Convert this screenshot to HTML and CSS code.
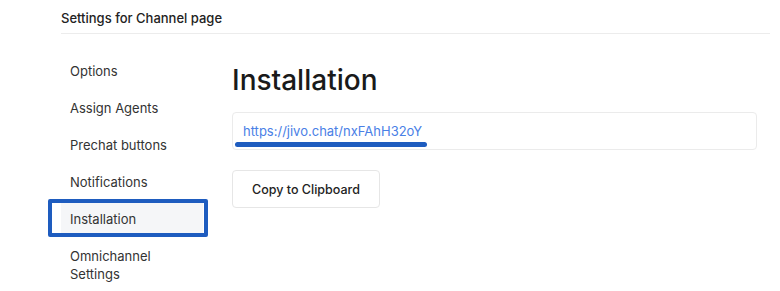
FILE: index.html
```html
<!DOCTYPE html>
<html lang="en">
<head>
  <meta charset="UTF-8">
  <title>Settings for Channel page</title>
  <meta name="viewport" content="width=device-width, initial-scale=1.0"/>
  <link rel="stylesheet" href="styles.css">
</head>
<body>

  <div class="page">
    <div class="topbar">Settings for Channel page</div>

    <div class="layout">
      <ul class="sidebar">
        <li>Options</li>
        <li>Assign Agents</li>
        <li>Prechat buttons</li>
        <li>Notifications</li>
        <li class="active">Installation<span class="mark-box"></span></li>
        <li>Omnichannel Settings</li>
      </ul>

      <div class="content">
        <h1>Installation</h1>
        <div class="link-box">
          <a href="#">https://jivo.chat/nxFAhH32oY</a>
          <span class="mark-line"></span>
        </div>
        <button type="button">Copy to Clipboard</button>
      </div>
    </div>
  </div>

</body>
</html>
```

FILE: styles.css
```css
body {
  margin: 0;
  background-color: #fff;
  color: #2b2b2b;
  font-family: Inter, "Helvetica Neue", Arial, sans-serif;
}
.page {
  padding: 0 10px 0 61px;
}
.topbar {
  height: 33px;
  line-height: 36px;
  font-size: 13px;
  font-weight: 500;
  color: #222;
  border-bottom: 1px solid #ececec;
}
.layout {
  display: flex;
}
.sidebar {
  list-style: none;
  margin: 0;
  padding: 18px 0 0;
  width: 142px;
  flex-shrink: 0;
  margin-right: 29px;
}
.sidebar li {
  position: relative;
  padding: 9.5px 9px;
  line-height: 18px;
  font-size: 13px;
  color: #333;
}
.sidebar li.active {
  background-color: #f5f6f8;
}
.mark-box {
  position: absolute;
  left: -13px;
  top: -1px;
  width: 152px;
  height: 30px;
  border: 4px solid #1e5cbf;
  border-radius: 2px;
}
.content {
  flex: 1;
  padding: 29px 13px 0 0;
}
h1 {
  margin: 0;
  font-size: 28px;
  line-height: 34px;
  font-weight: 500;
  color: #1a1a1a;
}
.link-box {
  position: relative;
  margin-top: 15px;
  height: 36px;
  border: 1px solid #ebebeb;
  border-radius: 4px;
  padding: 0 10px;
  line-height: 36px;
  font-size: 13px;
}
.link-box a {
  color: #4a80e6;
  text-decoration: none;
}
.mark-line {
  position: absolute;
  left: 2px;
  top: 29px;
  width: 192px;
  height: 5px;
  border-radius: 3px;
  background-color: #1e5cbf;
}
button {
  margin-top: 20px;
  width: 148px;
  height: 38px;
  background-color: #fff;
  border: 1px solid #e6e6e6;
  border-radius: 4px;
  font-family: inherit;
  font-size: 12.5px;
  font-weight: 500;
  color: #222;
  cursor: pointer;
}
```
